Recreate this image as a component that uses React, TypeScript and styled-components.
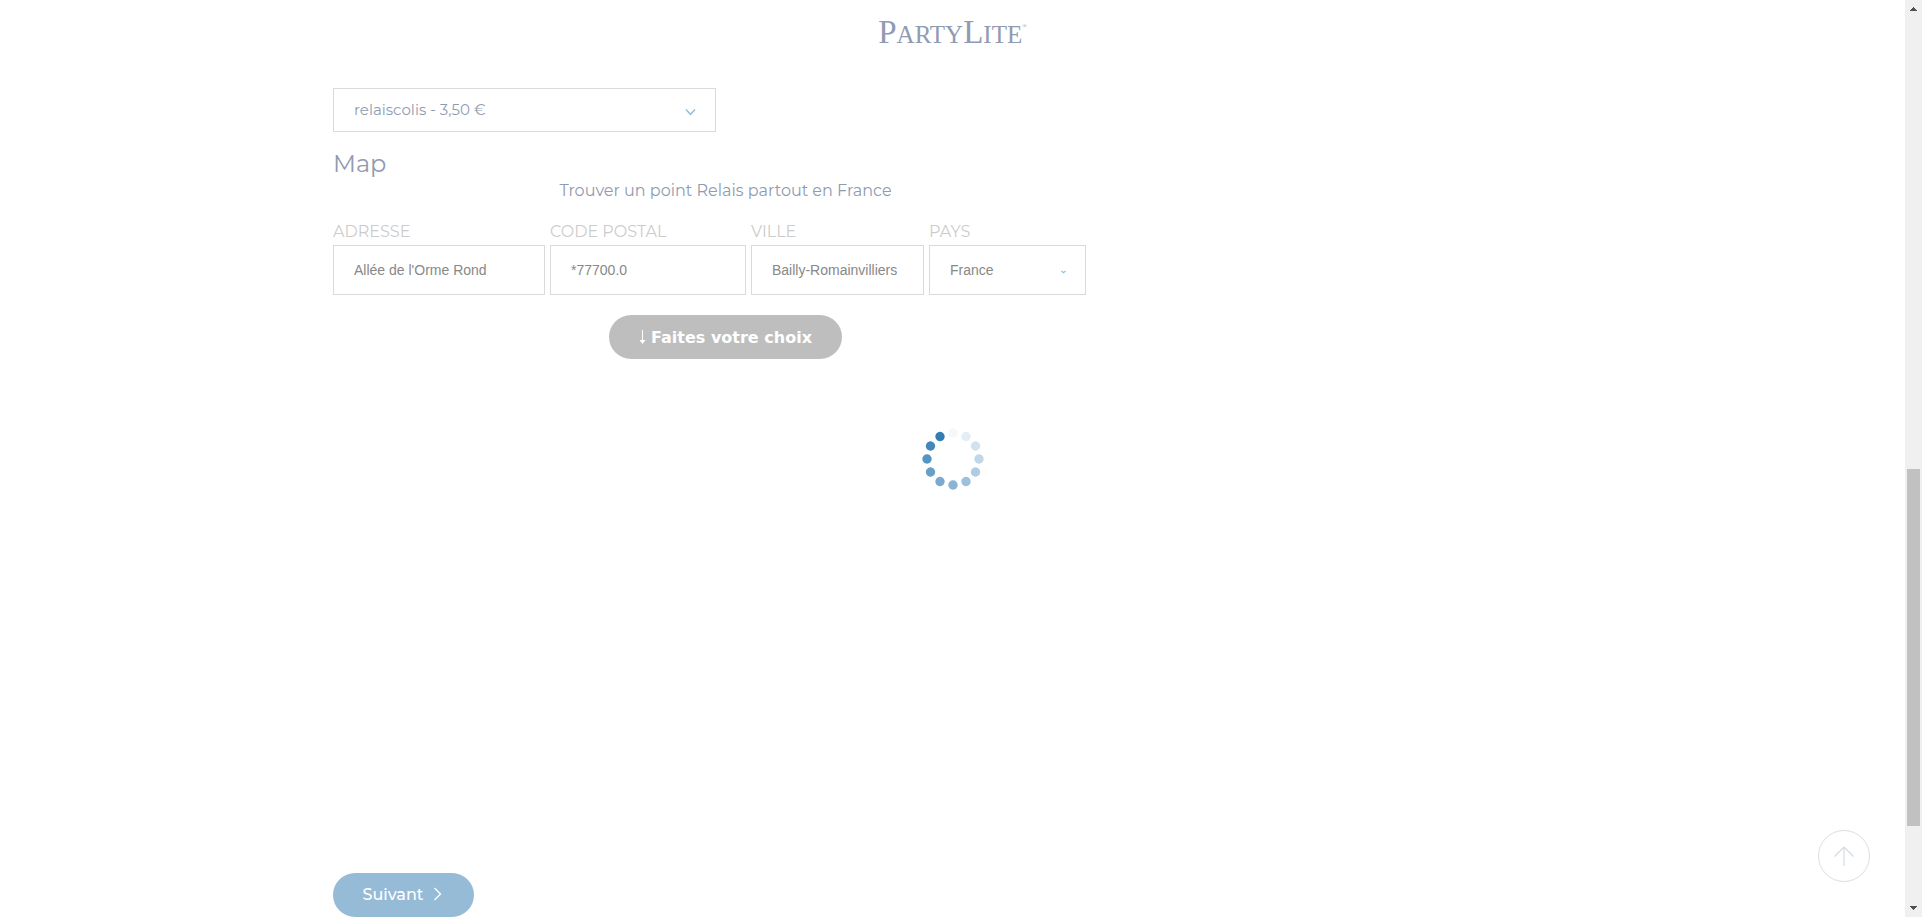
import React from "react";
import styled, { createGlobalStyle } from "styled-components";

const sans = `Montserrat, Inter, "Liberation Sans", sans-serif`;
const arial = `"Liberation Sans", Arial, sans-serif`;

const GlobalStyle = createGlobalStyle`
  *, *::before, *::after { box-sizing: border-box; }
  body { margin: 0; background: #fff; color: #8f9bb0; font-family: ${sans}; }
`;

const Window = styled.div`
  display: flex;
  min-height: 100vh;
`;

const Page = styled.div`
  flex: 1;
  min-width: 0;
  display: flex;
  flex-direction: column;
`;

const Header = styled.header`
  display: flex;
  justify-content: center;
  height: 88px;
  padding-top: 12px;
`;

const Logo = styled.a`
  display: flex;
  align-items: baseline;
  height: 40px;
  color: #8f9bb2;
  font: 25px/40px "Liberation Serif", "Times New Roman", serif;
  text-decoration: none;
`;

const LogoCap = styled.span`
  font-size: 33px;
`;

const LogoMark = styled.sup`
  align-self: flex-start;
  font-size: 6px;
  line-height: 28px;
`;

const Content = styled.main`
  flex: 1;
  display: flex;
  flex-direction: column;
  align-items: flex-start;
  width: 100%;
  max-width: 1239px;
  margin: 0 auto;
`;

const SelectBox = styled.div<{ $width: string }>`
  position: relative;
  width: ${(p) => p.$width};
  max-width: 100%;
`;

const Select = styled.select<{ $tall?: boolean }>`
  display: block;
  appearance: none;
  width: 100%;
  height: ${(p) => (p.$tall ? 50 : 44)}px;
  padding: ${(p) => (p.$tall ? "0 20px" : "0 20px 2px")};
  border: 1px solid #dadada;
  border-radius: 0;
  background: #fff;
  color: ${(p) => (p.$tall ? "#888" : "#8f9bb0")};
  font-family: ${(p) => (p.$tall ? arial : sans)};
  font-size: ${(p) => (p.$tall ? 14 : 15)}px;
`;

const Chevron = styled.svg<{ $size: number }>`
  position: absolute;
  top: calc(50% + 2px);
  right: 20px;
  width: ${(p) => p.$size}px;
  height: ${(p) => p.$size}px;
  transform: translateY(-50%);
  pointer-events: none;
  fill: none;
  stroke: #96c0dc;
`;

const Title = styled.h2`
  margin: 16px 0 0;
  font-size: 24px;
  font-weight: 400;
  line-height: 32px;
`;

const Finder = styled.form`
  display: flex;
  flex-direction: column;
  align-items: center;
  width: 100%;
  max-width: 785px;
`;

const Intro = styled.p`
  margin: 0;
  font-size: 16px;
  line-height: 22px;
`;

const Fields = styled.div`
  align-self: flex-start;
  display: flex;
  gap: 5px;
  margin: 18px 0 20px;
`;

const Field = styled.div<{ $width: number }>`
  width: ${(p) => p.$width}px;
`;

const Label = styled.label`
  display: block;
  padding-bottom: 2px;
  color: #ccc;
  font-size: 16px;
  line-height: 23px;
  text-transform: uppercase;
  white-space: nowrap;
`;

const Input = styled.input`
  display: block;
  width: 100%;
  height: 50px;
  padding: 0 20px;
  border: 1px solid #dadada;
  background: #fff;
  color: #888;
  font: 14px ${arial};
`;

const Pill = styled.button<{ $tone: string; $width: number }>`
  display: flex;
  align-items: center;
  justify-content: center;
  width: ${(p) => p.$width}px;
  height: 44px;
  padding: 0;
  border: 0;
  border-radius: 22px;
  background: ${(p) => p.$tone};
  color: #fff;
  font: 500 16px ${sans};
  white-space: nowrap;
`;

const ChoicePill = styled(Pill)`
  gap: 5px;
  font: 700 16px "DejaVu Sans", Verdana, sans-serif;
`;

const NextPill = styled(Pill)`
  gap: 10px;
  padding: 0 2px 2px 0;
`;

const MapArea = styled.div`
  flex: 1;
  min-height: 300px;
`;

const Spinner = styled.svg`
  position: fixed;
  top: 50%;
  left: calc(50% - 8px);
  width: 66px;
  height: 66px;
  transform: translate(-50%, -50%);
`;

const ToTop = styled.button`
  position: fixed;
  right: 52px;
  bottom: 35px;
  display: flex;
  align-items: center;
  justify-content: center;
  width: 52px;
  height: 52px;
  padding: 0;
  border: 1px solid #dcdee0;
  border-radius: 50%;
  background: #fff;
`;

const ScrollBar = styled.aside`
  position: sticky;
  top: 0;
  display: flex;
  flex-direction: column;
  align-items: center;
  width: 17px;
  height: 100vh;
  background: #f0f0f0;
`;

const ScrollArrow = styled.svg`
  flex: none;
  width: 17px;
  height: 17px;
  fill: #505050;
`;

const Track = styled.div<{ $share: number; $thumb?: boolean }>`
  flex: ${(p) => p.$share} 0 0;
  width: 13px;
  background: ${(p) => (p.$thumb ? "#c1c1c1" : "transparent")};
`;

const dots = [
  "#f4f8fb", "#e2edf5", "#d1e2ee", "#bfd7e8", "#aecce2", "#9cc1dc",
  "#8ab4d4", "#7aaad0", "#689fc9", "#5694c2", "#4488bb", "#317db4",
];

export default function App() {
  return (
    <Window>
      <GlobalStyle />
      <Page>
        <Header>
          <Logo href="#" aria-label="PartyLite">
            <LogoCap>P</LogoCap>ARTY<LogoCap>L</LogoCap>ITE<LogoMark>®</LogoMark>
          </Logo>
        </Header>
        <Content>
          <SelectBox $width="383px">
            <Select aria-label="Mode de livraison">
              <option>relaiscolis - 3,50 €</option>
            </Select>
            <Chevron $size={11} viewBox="0 0 11 11" strokeWidth="1.6">
              <path d="M1 3l4.500 4.800L10 3" />
            </Chevron>
          </SelectBox>
          <Title>Map</Title>
          <Finder onSubmit={(e) => e.preventDefault()}>
            <Intro>Trouver un point Relais partout en France</Intro>
            <Fields>
              <Field $width={212}>
                <Label htmlFor="adresse">Adresse</Label>
                <Input id="adresse" defaultValue="Allée de l'Orme Rond" />
              </Field>
              <Field $width={196}>
                <Label htmlFor="code">Code postal</Label>
                <Input id="code" defaultValue="*77700.0" />
              </Field>
              <Field $width={173}>
                <Label htmlFor="ville">Ville</Label>
                <Input id="ville" defaultValue="Bailly-Romainvilliers" />
              </Field>
              <Field $width={157}>
                <Label htmlFor="pays">Pays</Label>
                <SelectBox $width="100%">
                  <Select id="pays" $tall>
                    <option>France</option>
                  </Select>
                  <Chevron $size={5} viewBox="0 0 5 5" strokeWidth="1.2">
                    <path d="M.5 1.5l2 1.800 2-1.800" />
                  </Chevron>
                </SelectBox>
              </Field>
            </Fields>
            <ChoicePill $tone="#bebebe" $width={233}>
              <svg width="7" height="14" viewBox="0 0 7 14" aria-hidden="true">
                <path d="M3 0h1v10h2.500L3.500 14 .5 10H3z" fill="#fff" />
              </svg>
              Faites votre choix
            </ChoicePill>
          </Finder>
          <MapArea />
          <NextPill $tone="#96bbd7" $width={141}>
            Suivant
            <svg width="9" height="14" viewBox="0 0 9 14" fill="none" stroke="#fff" strokeWidth="1.3" aria-hidden="true">
              <path d="M1.500 1l6 6-6 6" />
            </svg>
          </NextPill>
        </Content>
      </Page>
      <ScrollBar aria-hidden="true">
        <ScrollArrow viewBox="0 0 17 17">
          <path d="M5 11h7v-1h-1V9h-1V8H9V7H8v1H7v1H6v1H5z" />
        </ScrollArrow>
        <Track $share={452} />
        <Track $share={357} $thumb />
        <Track $share={74} />
        <ScrollArrow viewBox="0 0 17 17">
          <path d="M5 6h7v1h-1v1h-1v1H9v1H8V9H7V8H6V7H5z" />
        </ScrollArrow>
      </ScrollBar>
      <Spinner viewBox="-33 -33 66 66" role="img" aria-label="Chargement">
        {dots.map((color, i) => (
          <circle key={color} cy="-26" r="4.7" fill={color} transform={`rotate(${i * 30})`} />
        ))}
      </Spinner>
      <ToTop aria-label="Haut de page">
        <svg width="20" height="20" viewBox="0 0 20 20" fill="none">
          <path d="M10 1v19" stroke="#e6eaef" strokeWidth="2" />
          <path d="M.5 10.5L10 1l9.500 9.500" stroke="#d3d9e1" strokeWidth="1.2" />
        </svg>
      </ToTop>
    </Window>
  );
}
